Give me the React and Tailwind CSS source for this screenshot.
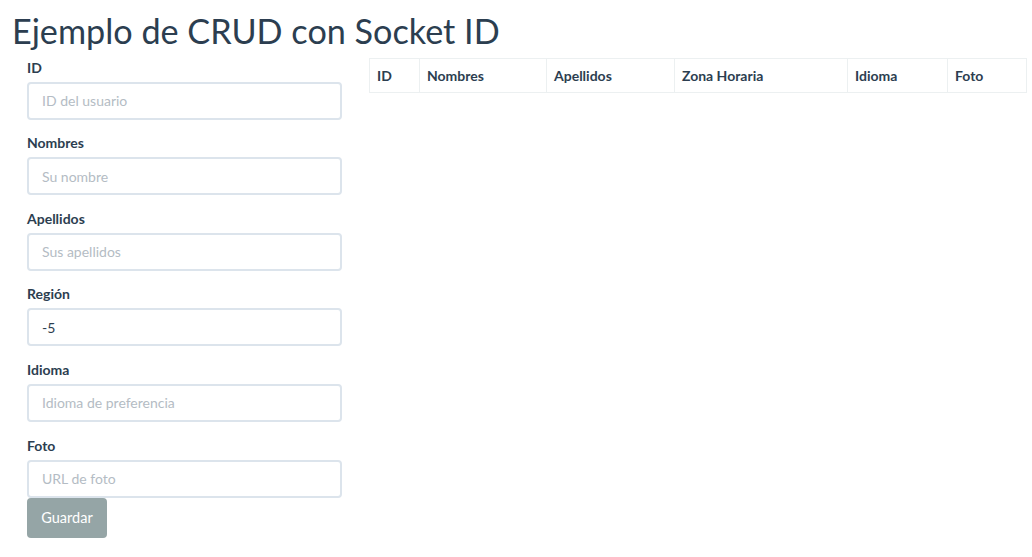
import React, { useState } from 'react';

const fields = [
  { label: 'ID', name: 'id', placeholder: 'ID del usuario' },
  { label: 'Nombres', name: 'nombres', placeholder: 'Su nombre' },
  { label: 'Apellidos', name: 'apellidos', placeholder: 'Sus apellidos' },
  { label: 'Región', name: 'region', placeholder: 'Zona horaria' },
  { label: 'Idioma', name: 'idioma', placeholder: 'Idioma de preferencia' },
  { label: 'Foto', name: 'foto', placeholder: 'URL de foto' },
];

const columns = [
  { title: 'ID', w: 'w-[50px]' },
  { title: 'Nombres', w: 'w-[127px]' },
  { title: 'Apellidos', w: 'w-[128px]' },
  { title: 'Zona Horaria', w: 'w-[173px]' },
  { title: 'Idioma', w: 'w-[100px]' },
  { title: 'Foto', w: 'w-[79px]' },
];

const App = () => {
  const [formData, setFormData] = useState({
    id: '', nombres: '', apellidos: '', region: '-5', idioma: '', foto: ''
  });

  const handleInputChange = (e) => {
    setFormData({ ...formData, [e.target.name]: e.target.value });
  };

  return (
    <div className="min-h-screen bg-white pl-[12px] text-[#2c3e50] font-['Lato','Liberation_Sans',sans-serif]">
      <h1 className="pt-[11px] text-[34.2px] leading-[39.6px] font-normal">Ejemplo de CRUD con Socket ID</h1>

      <div className="flex items-start mt-[7px]">
        <form className="ml-[15px] w-[315px]" onSubmit={(e) => e.preventDefault()}>
          {fields.map((f, i) => (
            <div key={f.name} className={i < fields.length - 1 ? 'mb-[13.6px]' : ''}>
              <label className="block text-[14px] leading-[20px] font-bold mb-[4px]">{f.label}</label>
              <input
                type="text"
                name={f.name}
                value={formData[f.name]}
                onChange={handleInputChange}
                placeholder={f.placeholder}
                className="block w-full h-[38px] px-[13px] text-[14px] text-[#2c3e50] bg-white border-2 border-[#dce4ec] rounded-[4px] placeholder:text-[#b4bcc4] focus:outline-none"
              />
            </div>
          ))}
          <button type="submit" className="block h-[40px] w-[80px] rounded-[4px] bg-[#95a5a6] text-white text-[14.5px]">
            Guardar
          </button>
        </form>

        <table className="ml-[27px] w-[657px] border-collapse table-fixed">
          <thead>
            <tr>
              {columns.map((c) => (
                <th key={c.title} className={`${c.w} h-[34px] px-[7px] text-left text-[14px] font-bold border border-[#ecf0f1]`}>
                  {c.title}
                </th>
              ))}
            </tr>
          </thead>
          <tbody></tbody>
        </table>
      </div>
    </div>
  );
};

export default App;
